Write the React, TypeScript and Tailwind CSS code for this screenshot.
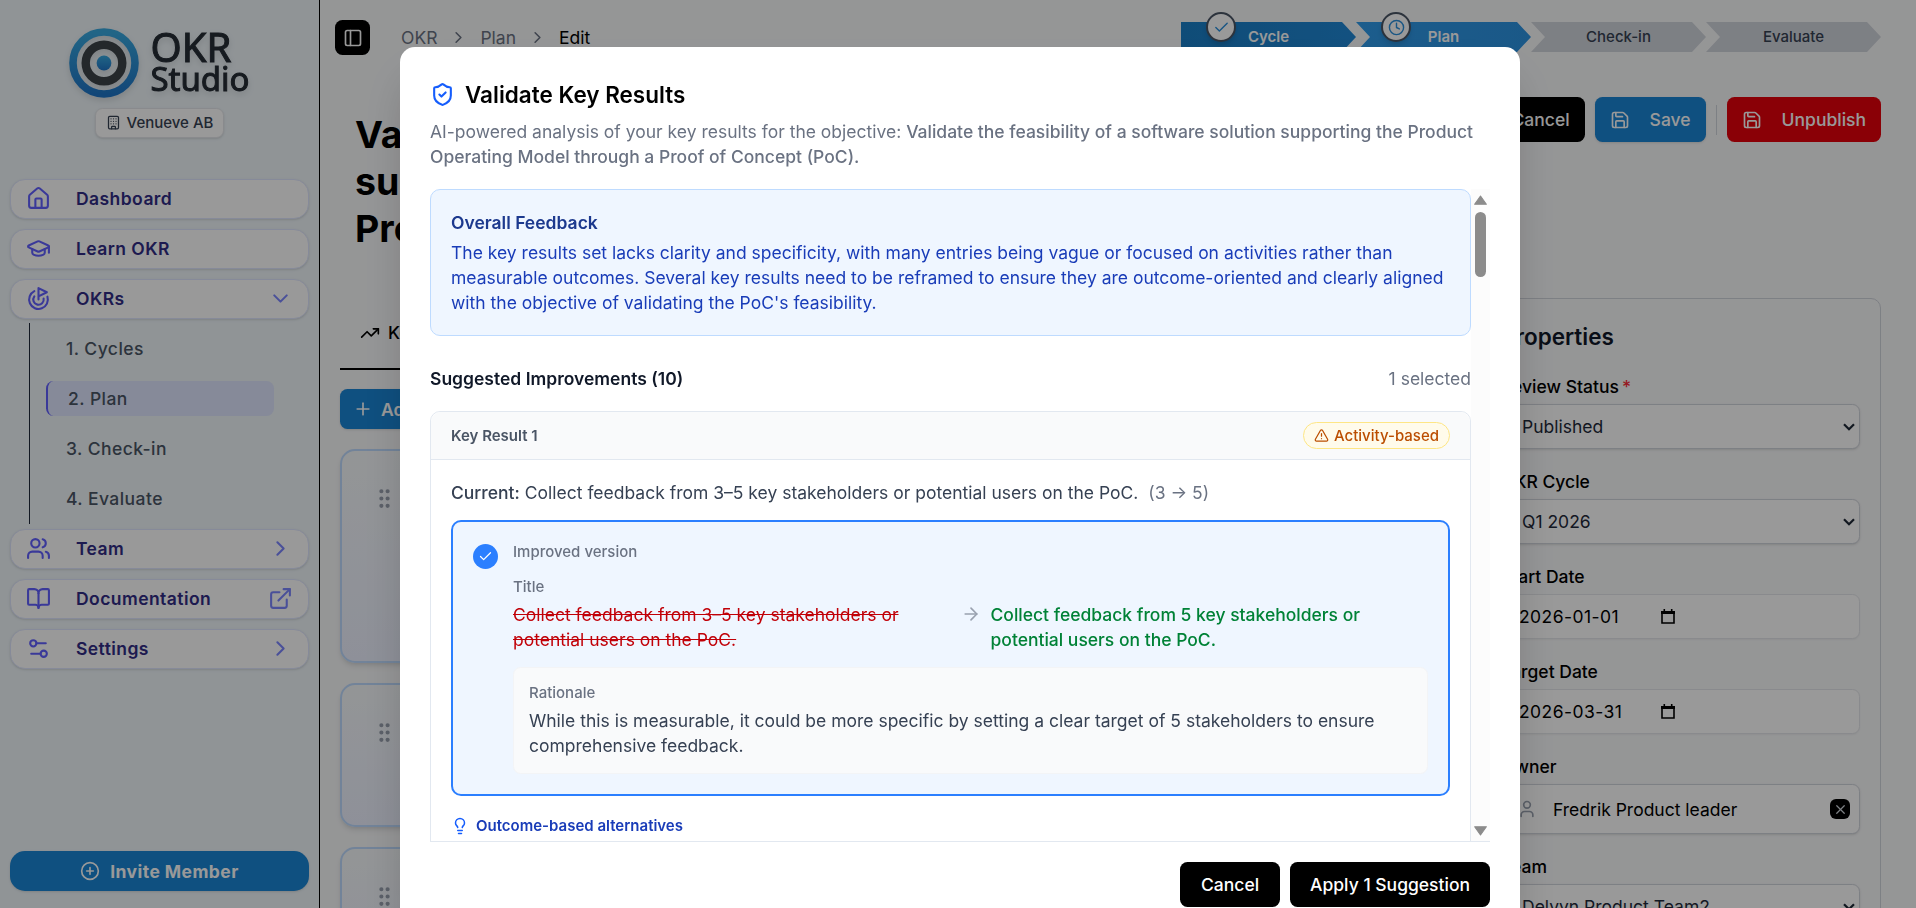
import { useLayoutEffect } from "react";
import type { ReactNode } from "react";
import {
  ArrowRight,
  BookOpen,
  Building,
  Check,
  ChevronDown,
  ChevronRight,
  CirclePlus,
  Clock,
  ExternalLink,
  GoalIcon,
  GraduationCap,
  GripVertical,
  House,
  Lightbulb,
  PanelLeft,
  Plus,
  Save,
  Settings2,
  ShieldCheck,
  TrendingUp,
  TriangleAlert,
  User,
  Users,
  X,
} from "lucide-react";

const stages = [
  { label: "1. Cycles" },
  { label: "2. Plan", active: true },
  { label: "3. Check-in" },
  { label: "4. Evaluate" },
];

const steps = [
  { label: "Cycle", state: "done" },
  { label: "Plan", state: "current" },
  { label: "Check-in", state: "todo" },
  { label: "Evaluate", state: "todo" },
];

const stepColors: Record<string, string> = {
  done: "bg-linear-to-r from-[#1a7fc8] to-[#2088d6] font-semibold text-white",
  current: "bg-linear-to-r from-[#2f9bea] to-[#2c93e2] font-semibold text-white",
  todo: "bg-gray-300 font-medium text-gray-700",
};

function Logo() {
  return (
    <div className="flex items-center gap-[11px] drop-shadow-md">
      <svg viewBox="0 0 70 70" className="size-[70px]" aria-hidden="true">
        <defs>
          <linearGradient id="ring" x1="0" y1="0" x2="0" y2="1">
            <stop offset="0" stopColor="#38a9e0" />
            <stop offset="1" stopColor="#1f76c8" />
          </linearGradient>
        </defs>
        <circle cx="35" cy="35" r="31" fill="none" stroke="url(#ring)" strokeWidth="7.6" />
        <circle cx="35" cy="35" r="18.3" fill="none" stroke="#3d4349" strokeWidth="8.4" />
        <circle cx="35" cy="35" r="7.4" fill="url(#ring)" />
      </svg>
      <div className="font-['Noto_Sans',sans-serif] text-[#262d36] [-webkit-text-stroke:1px_#262d36]">
        <div className="text-[40px] leading-[32px]">OKR</div>
        <div className="text-[33px] leading-[32px]">Studio</div>
      </div>
    </div>
  );
}

function NavItem({ icon, label, trailing }: { icon: ReactNode; label: string; trailing?: ReactNode }) {
  return (
    <a
      href="#"
      className="flex h-[40px] items-center rounded-xl border border-indigo-100 bg-white pr-[15px] pl-[15px] text-sm font-semibold tracking-wide text-indigo-900 shadow-sm"
    >
      <span className="text-indigo-500">{icon}</span>
      <span className="ml-[25px] flex-1">{label}</span>
      <span className="text-indigo-400">{trailing}</span>
    </a>
  );
}

function Sidebar() {
  return (
    <aside className="flex w-64 shrink-0 flex-col border-r border-black bg-[#f0f7fb] px-[10px]">
      <div className="flex flex-col items-center pt-[28px]">
        <Logo />
        <div className="mt-[10px] flex items-center gap-[6px] rounded-md border border-gray-200 bg-white px-[10px] py-[4px] text-xs font-medium text-gray-700 shadow-sm">
          <Building className="size-[15px]" />
          Venueve AB
        </div>
      </div>

      <nav className="mt-[41px] flex flex-col gap-[10px]">
        <NavItem icon={<House className="size-5" />} label="Dashboard" />
        <NavItem icon={<GraduationCap className="size-5" />} label="Learn OKR" />
        <div>
          <NavItem icon={<GoalIcon className="size-5" />} label="OKRs" trailing={<ChevronDown className="size-5" />} />
          <ul className="mt-[4px] mr-[35px] -mb-[5px] ml-[19px] flex flex-col gap-[15px] border-l border-gray-800 py-[8px] pl-[16px]">
            {stages.map((stage) => (
              <li key={stage.label}>
                <a
                  href="#"
                  className={
                    stage.active
                      ? "flex h-[35px] items-center rounded-md border-l-2 border-indigo-500 bg-indigo-100 pl-[20px] text-sm font-medium tracking-wide text-gray-600"
                      : "flex h-[35px] items-center rounded-md pl-[20px] text-sm font-medium tracking-wide text-gray-600"
                  }
                >
                  {stage.label}
                </a>
              </li>
            ))}
          </ul>
        </div>
        <NavItem icon={<Users className="size-5" />} label="Team" trailing={<ChevronRight className="size-5" />} />
        <NavItem icon={<BookOpen className="size-5" />} label="Documentation" trailing={<ExternalLink className="size-5" />} />
        <NavItem icon={<Settings2 className="size-5" />} label="Settings" trailing={<ChevronRight className="size-5" />} />
      </nav>

      <button className="mt-auto mb-[17px] flex h-8 shrink-0 items-center justify-center gap-[10px] rounded-xl bg-[#1985d5] text-sm font-bold tracking-wide text-white shadow-sm">
        <CirclePlus className="size-4" />
        Invite Member
      </button>
    </aside>
  );
}

function Stepper() {
  return (
    <ol className="flex w-[700px] text-xs">
      {steps.map((step, i) => (
        <li key={step.label} className="relative flex-1">
          <div
            className={`flex h-6 items-center justify-center ${stepColors[step.state]} ${
              i === 0
                ? "[clip-path:polygon(0_0,calc(100%-14px)_0,100%_50%,calc(100%-14px)_100%,0_100%)]"
                : "[clip-path:polygon(0_0,calc(100%-14px)_0,100%_50%,calc(100%-14px)_100%,0_100%,14px_50%)]"
            }`}
          >
            {step.label}
          </div>
          {step.state !== "todo" && (
            <span className="absolute -top-[10px] left-[25px] flex size-6 items-center justify-center rounded-full border-2 border-gray-600 bg-white text-[#2b8fdc] shadow-md">
              {step.state === "done" ? <Check className="size-[17px]" /> : <Clock className="size-[17px]" />}
            </span>
          )}
        </li>
      ))}
    </ol>
  );
}

function KeyResultCard({ height }: { height: string }) {
  return (
    <div className={`rounded-xl border-2 border-blue-200 bg-linear-to-b from-[#f6f9fb] to-[#edf1ff] px-[30px] pt-[35px] shadow-md ${height}`}>
      <GripVertical className="size-5 text-gray-400" />
    </div>
  );
}

function SelectField({ id, label, value, required }: { id: string; label: string; value: string; required?: boolean }) {
  return (
    <div>
      <label htmlFor={id} className="mb-[5px] flex text-sm font-medium">
        {label}
        {required && <span className="ml-[3px] text-red-500">*</span>}
      </label>
      <div className="relative">
        <select
          id={id}
          className="h-9 w-full appearance-none rounded-md border border-gray-300 bg-white px-[20px] text-sm text-gray-800 shadow-sm"
        >
          <option>{value}</option>
        </select>
        <svg viewBox="0 0 12 8" className="pointer-events-none absolute top-[19px] right-[5px] h-[8px] w-[12px]" aria-hidden="true">
          <path d="M1 1.2 6 6.2 11 1.2" fill="none" stroke="#1f2937" strokeWidth="2.2" />
        </svg>
      </div>
    </div>
  );
}

function DateField({ id, label, value }: { id: string; label: string; value: string }) {
  return (
    <div>
      <label htmlFor={id} className="mb-[5px] block text-sm font-medium">
        {label}
      </label>
      <div className="flex h-9 items-center rounded-md border border-gray-200 bg-white pl-[17px] shadow-xs">
        <input id={id} defaultValue={value} className="w-[142px] bg-transparent text-sm tracking-wide outline-none" />
        <svg viewBox="0 0 14 15" className="h-[15px] w-[14px]" aria-hidden="true">
          <path d="M1 3h12v11H1z" fill="none" stroke="black" strokeWidth="1.6" />
          <path d="M0 2h14v3H0zM2.5 0h1.6v3H2.5zM9.9 0h1.6v3H9.9z" fill="black" />
        </svg>
      </div>
    </div>
  );
}

function Properties() {
  return (
    <section className="mt-[156px] w-[401px] shrink-0 rounded-lg border border-gray-300 p-[20px]">
      <h2 className="mb-[20px] text-lg font-semibold text-gray-900">Properties</h2>
      <div className="flex flex-col gap-[20px]">
        <SelectField id="status" label="Review Status" value="Published" required />
        <SelectField id="cycle" label="OKR Cycle" value="Q1 2026" />
        <DateField id="start" label="Start Date" value="2026-01-01" />
        <DateField id="target" label="Target Date" value="2026-03-31" />
        <div>
          <div className="mb-[5px] text-sm font-medium">Owner</div>
          <div className="flex h-10 items-center rounded-md border border-gray-300 bg-white pr-[9px] pl-[15px] text-sm shadow-sm">
            <User className="size-4 text-gray-400" />
            <span className="ml-[16px] flex-1">Fredrik Product leader</span>
            <button aria-label="Clear owner" className="flex size-4 items-center justify-center rounded-[6px] bg-black text-gray-300">
              <X className="size-[15px]" />
            </button>
          </div>
        </div>
        <SelectField id="team" label="Team" value="Delvyn Product Team2" />
      </div>
    </section>
  );
}

function EditPage() {
  return (
    <main className="min-w-0 flex-1 bg-[#f9fafb]">
      <header className="flex items-start pr-[35px] pl-[15px]">
        <button aria-label="Toggle sidebar" className="mt-4 flex size-7 items-center justify-center rounded-md bg-black text-white">
          <PanelLeft className="size-4" />
        </button>
        <nav aria-label="Breadcrumb" className="mt-[25px] ml-[31px] flex flex-1 items-center gap-[12px] text-sm text-gray-500">
          <a href="#">OKR</a>
          <ChevronRight className="size-[19px]" />
          <a href="#">Plan</a>
          <ChevronRight className="size-[19px]" />
          <span className="text-black">Edit</span>
        </nav>
        <div className="pt-[22px]">
          <Stepper />
        </div>
      </header>

      <div className="mt-[42px] flex items-start justify-end pr-[35px] pl-[20px]">
        <div className="min-w-0 flex-1">
          <h1 className="h-[187px] pt-[14px] pl-[15px] text-3xl leading-[47px] font-bold whitespace-nowrap text-black">
            Validate the feasibility of a software
            <br />
            supporting the Product Operating
            <br />
            Proof of Concept (PoC)
          </h1>
          <div className="flex border-b-2 border-black pt-[36px] pb-[23px] pl-[20px] text-sm font-medium">
            <button className="flex items-center gap-[8px]">
              <TrendingUp className="size-4" />
              Key Results
            </button>
          </div>
          <button className="mt-[19px] flex h-8 items-center gap-[8px] rounded-md bg-[#1985d5] px-[13px] text-sm font-semibold text-white shadow-sm">
            <Plus className="size-[20px]" />
            Add Key Result
          </button>
          <div className="mt-[20px] mr-[30px] flex flex-col gap-[20px]">
            <KeyResultCard height="h-[214px]" />
            <KeyResultCard height="h-[144px]" />
            <KeyResultCard height="h-[144px]" />
          </div>
        </div>

        <div className="flex flex-col items-end">
          <div className="flex items-center gap-[10px] text-sm font-medium text-white">
            <button className="h-9 rounded-md bg-black px-[15px]">Cancel</button>
            <button className="flex h-9 items-center gap-4 rounded-md bg-[#1985d5] px-[15px] shadow-sm">
              <Save className="size-4" />
              Save
            </button>
            <span className="h-6 w-px bg-gray-300" />
            <button className="flex h-9 items-center gap-4 rounded-md bg-red-600 px-[15px]">
              <Save className="size-4" />
              Unpublish
            </button>
          </div>
          <Properties />
        </div>
      </div>
    </main>
  );
}

function Suggestion() {
  return (
    <article className="mt-4 rounded-lg border border-slate-200">
      <div className="flex h-[48px] items-center justify-between rounded-t-lg border-b border-slate-200 bg-gray-50 px-[20px] text-xs font-medium">
        <h4 className="font-semibold text-gray-600">Key Result 1</h4>
        <span className="flex items-center gap-1 rounded-full border border-amber-200 bg-amber-50 px-2 py-[3px] text-amber-700">
          <TriangleAlert className="size-[15px]" />
          Activity-based
        </span>
      </div>
      <div className="p-[20px]">
        <p className="text-sm text-gray-700">
          <span className="font-medium">Current:</span> Collect feedback from 3–5 key stakeholders or potential users on the PoC.
          <span className="ml-2 text-gray-500">(3 → 5)</span>
        </p>

        <div className="mt-[15px] flex items-start gap-[15px] rounded-lg border-2 border-blue-500 bg-blue-50 p-[20px]">
          <button
            role="checkbox"
            aria-checked="true"
            aria-label="Use improved version"
            className="mt-[2px] flex size-5 shrink-0 items-center justify-center rounded-full bg-blue-500 text-white"
          >
            <Check className="size-[15px]" />
          </button>
          <div className="flex-1">
            <div className="text-xs font-medium text-gray-500">Improved version</div>
            <div className="mt-[15px] mb-[5px] text-xs font-medium text-gray-500">Title</div>
            <div className="grid grid-cols-[1fr_auto_1fr] gap-2 text-sm">
              <p className="text-red-700 line-through">Collect feedback from 3–5 key stakeholders or potential users on the PoC.</p>
              <ArrowRight className="mt-[2px] size-4 text-gray-400" />
              <p className="font-medium text-green-700">Collect feedback from 5 key stakeholders or potential users on the PoC.</p>
            </div>
            <div className="mt-[15px] rounded-md border border-gray-100 bg-gray-50 p-[15px]">
              <div className="mb-[5px] text-xs font-medium text-gray-500">Rationale</div>
              <p className="text-sm text-gray-700">
                While this is measurable, it could be more specific by setting a clear target of 5 stakeholders to ensure comprehensive
                feedback.
              </p>
            </div>
          </div>
        </div>

        <div className="mt-[20px] flex items-center gap-[7px] text-xs font-semibold text-blue-800">
          <Lightbulb className="size-[18px] text-blue-600" />
          Outcome-based alternatives
        </div>
      </div>
    </article>
  );
}

function Scrollbar() {
  return (
    <div className="flex w-[19px] shrink-0 flex-col items-center bg-[#fcfcfc] pt-[6px] pb-[5px]" aria-hidden="true">
      <svg viewBox="0 0 12 9" className="h-[10px] w-[13px]">
        <path d="M6 0.8 11.4 8.4H0.6z" fill="#8b8b8b" stroke="#8b8b8b" strokeLinejoin="round" />
      </svg>
      <div className="mt-[7px] h-[65px] w-[11px] rounded-full bg-[#8b8b8b]" />
      <svg viewBox="0 0 12 9" className="mt-auto h-[10px] w-[13px]">
        <path d="M6 8.2 11.4 0.6H0.6z" fill="#8b8b8b" stroke="#8b8b8b" strokeLinejoin="round" />
      </svg>
    </div>
  );
}

function ValidateDialog() {
  return (
    <div
      role="dialog"
      aria-modal="true"
      aria-labelledby="validate-title"
      className="flex h-[98vh] w-full max-w-4xl shrink-0 flex-col rounded-xl bg-white p-[30px] shadow-2xl"
    >
      <h2 id="validate-title" className="flex items-center gap-[10px] text-lg leading-[35px] font-semibold text-black">
        <ShieldCheck className="size-5 text-blue-600" />
        Validate Key Results
      </h2>
      <p className="mt-[7px] text-sm text-gray-500">
        AI-powered analysis of your key results for the objective:{" "}
        <span className="font-medium">
          Validate the feasibility of a software solution supporting the Product Operating Model through a Proof of Concept (PoC).
        </span>
      </p>

      <div className="mt-[20px] flex min-h-0 flex-1">
        <div className="min-w-0 flex-1 overflow-hidden">
          <div className="rounded-lg border border-blue-200 bg-blue-50 p-[20px] text-sm">
            <h3 className="mb-[5px] font-semibold text-blue-900">Overall Feedback</h3>
            <p className="text-blue-800">
              The key results set lacks clarity and specificity, with many entries being vague or focused on activities rather than
              measurable outcomes. Several key results need to be reframed to ensure they are outcome-oriented and clearly aligned with
              the objective of validating the PoC's feasibility.
            </p>
          </div>
          <div className="mt-[30px] flex justify-between text-sm">
            <h3 className="font-semibold text-gray-900">Suggested Improvements (10)</h3>
            <span className="text-gray-500">1 selected</span>
          </div>
          <Suggestion />
        </div>
        <Scrollbar />
      </div>

      <div className="flex justify-end gap-[10px] border-t border-slate-200 pt-[20px] text-sm font-medium text-white">
        <button className="h-9 rounded-md bg-black px-[21px]">Cancel</button>
        <button className="h-9 rounded-md bg-black px-[20px]">Apply 1 Suggestion</button>
      </div>
    </div>
  );
}

export default function App() {
  // The whole UI is sized in rem against a 20px root
  useLayoutEffect(() => {
    document.documentElement.classList.add("text-[20px]");
  }, []);

  return (
    <div className="relative h-screen overflow-hidden font-[Inter,sans-serif]">
      <div className="flex h-full overflow-hidden">
        <Sidebar />
        <EditPage />
      </div>
      <div className="fixed inset-0 flex items-start justify-center overflow-hidden bg-black/40 pt-[47px] pl-[4px]">
        <ValidateDialog />
      </div>
    </div>
  );
}
